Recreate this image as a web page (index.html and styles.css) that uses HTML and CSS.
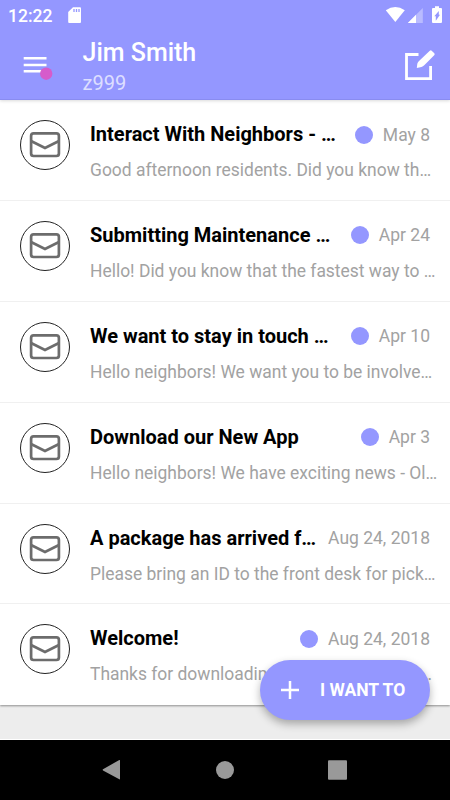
FILE: index.html
```
<!DOCTYPE html>
<html lang="en">
<head>
<meta charset="utf-8">
<title>Messages</title>
<link rel="stylesheet" href="styles.css">
</head>
<body>
<svg class="defs" width="0" height="0" aria-hidden="true">
  <symbol id="mail" viewBox="0 0 50 50">
    <circle cx="25" cy="25" r="24.5" fill="#fff" stroke="#222" stroke-width="1"/>
    <rect x="11.100" y="13.400" width="27.800" height="22.600" rx="2.500" fill="none" stroke="#6c6c6c" stroke-width="2.700"/>
    <path d="M11.500 21.200 25 28 38.500 21.200" fill="none" stroke="#6c6c6c" stroke-width="2.700"/>
  </symbol>
</svg>
<div class="screen">
  <header class="header">
    <div class="status">
      <span class="clock">12:22</span>
      <svg class="sd" width="14" height="17" viewBox="0 0 14 17"><path d="M5 .2h7Q13 .2 13 1.200v13.800q0 1-1 1H1.200q-1 0-1-1V5Z" fill="#fff"/><path d="M6 2v3M8.500 2v3M11 2v3" stroke="#9497ff" stroke-width="1.300"/></svg>
      <svg class="signals" width="58" height="18" viewBox="0 0 58 18">
        <path d="M.8 4.300Q10.300-2.300 19.800 4.300L10.300 16Z" fill="#fff"/>
        <path d="M37.800 2v15H22.800Z" fill="#fff" opacity=".35"/>
        <path d="M31 8.800V17h-8.200Z" fill="#fff"/>
        <path d="M50 .2h4v1.900h2q1 0 1 1v13q0 1-1 1h-8q-1 0-1-1v-13q0-1 1-1h2Z" fill="#fff"/>
        <path d="M53.800 5v3.700h1.200L50.800 14.800v-4.500h-1.500Z" fill="#9497ff"/>
      </svg>
    </div>
    <div class="bar">
      <div class="menu"><svg width="30" height="24" viewBox="0 0 30 24"><path d="M.7 2.300h22.800M.7 8.900h22.800M.7 15.300h22.800" stroke="#fff" stroke-width="2.500"/><circle cx="23.200" cy="17.700" r="6.200" fill="#d65ccb"/></svg></div>
      <div class="who"><div class="name">Jim Smith</div><div class="unit">z999</div></div>
      <svg class="compose" width="32" height="32" viewBox="0 0 32 32"><path d="M14.500 5.500H2.500V29.600H26.600V17" fill="none" stroke="#fff" stroke-width="2.800"/><path d="M12.800 19 13.300 14.800Q13.800 13.300 15 12.100L25.800 1.700Q26.700 .900 27.700 1.700L30.300 4.300Q31.200 5.300 30.200 6.300L20.500 16Q19 17.500 17.400 18Z" fill="#fff"/></svg>
    </div>
  </header>
  <main class="list">
    <article class="row"><svg class="mail"><use href="#mail"/></svg><div class="body"><div class="top"><h2>Interact With Neighbors - …</h2><i class="dot"></i><time>May 8</time></div><p>Good afternoon residents. Did you know th…</p></div></article>
    <article class="row"><svg class="mail"><use href="#mail"/></svg><div class="body"><div class="top"><h2>Submitting Maintenance …</h2><i class="dot"></i><time>Apr 24</time></div><p>Hello! Did you know that the fastest way to …</p></div></article>
    <article class="row"><svg class="mail"><use href="#mail"/></svg><div class="body"><div class="top"><h2>We want to stay in touch …</h2><i class="dot"></i><time>Apr 10</time></div><p>Hello neighbors! We want you to be involve…</p></div></article>
    <article class="row"><svg class="mail"><use href="#mail"/></svg><div class="body"><div class="top"><h2>Download our New App</h2><i class="dot"></i><time>Apr 3</time></div><p>Hello neighbors! We have exciting news - Ol…</p></div></article>
    <article class="row"><svg class="mail"><use href="#mail"/></svg><div class="body"><div class="top"><h2>A package has arrived f…</h2><time>Aug 24, 2018</time></div><p>Please bring an ID to the front desk for pick…</p></div></article>
    <article class="row"><svg class="mail"><use href="#mail"/></svg><div class="body"><div class="top"><h2>Welcome!</h2><i class="dot"></i><time>Aug 24, 2018</time></div><p class="last"><span>Thanks for downloading</span><span>.</span></p></div></article>
  </main>
  <div class="spacer"></div>
  <button class="fab"><svg width="18" height="18" viewBox="0 0 18 18"><path d="M9 0v18M0 9h18" stroke="#fff" stroke-width="2.500"/></svg><span>I WANT TO</span></button>
  <nav class="nav">
    <svg width="20" height="22" viewBox="0 0 20 22"><path d="M1 10.200 17.300 1Q18 .700 18 1.500V20Q18 20.700 17.300 20.300L1 11.500Q.300 10.800 1 10.200Z" fill="#999"/></svg>
    <svg width="20" height="20" viewBox="0 0 20 20"><circle cx="10" cy="10" r="9" fill="#999"/></svg>
    <svg width="20" height="20" viewBox="0 0 20 20"><rect x="0" y=".3" width="19" height="19.400" rx="1" fill="#999"/></svg>
  </nav>
</div>
</body>
</html>
```
FILE: styles.css
```
* { box-sizing: border-box; }
body { margin: 0; font-family: Roboto, sans-serif; background: #ededed; }
h2, p { margin: 0; }
.defs { position: absolute; }
.screen { position: relative; width: 450px; height: 800px; display: flex; flex-direction: column; overflow: hidden; background: #ededed; }
.header { height: 100px; background: #9497ff; color: #fff; border-bottom: 1px solid #898cf0; flex: none; z-index: 1; box-shadow: 0 1px 3px rgba(0,0,0,.15); }
.status { height: 30px; padding: 7px 7px 0 8px; display: flex; align-items: flex-start; }
.clock { font-size: 17.5px; line-height: 18px; font-weight: 500; width: 60px; }
.signals { margin: -1px 0 0 auto; }
.bar { display: flex; height: 69px; padding: 0 14px 0 23px; }
.menu { width: 59.5px; padding-top: 26px; }
.who { flex: 1; padding-top: 8px; }
.name { font-size: 25px; line-height: 30px; font-weight: 500; }
.unit { font-size: 20px; line-height: 30px; color: rgba(255,255,255,.7); }
.compose { margin-top: 19px; }
.list { height: 605px; flex: none; background: #fff; box-shadow: 0 1px 2px rgba(0,0,0,.4); }
.row { height: 100.9px; display: flex; padding: 20px 13px 0 20px; border-bottom: 1px solid #f0f0f0; }
.row:last-child { border-bottom: 0; }
.mail { width: 50px; height: 50px; flex: none; margin-right: 20px; }
.body { flex: 1; min-width: 0; }
.top { display: flex; align-items: center; height: 29px; padding-right: 7px; }
h2 { flex: 1; font-size: 20px; line-height: 29px; font-weight: 700; color: #000; white-space: nowrap; }
.dot { width: 18px; height: 18px; border-radius: 50%; background: #9497ff; margin-right: 10px; }
time { font-size: 17.5px; line-height: 30px; color: #a2a2a2; white-space: nowrap; }
p { margin-top: 6px; font-size: 17.46px; line-height: 30px; color: #a2a2a2; white-space: nowrap; }
.last { display: flex; justify-content: space-between; padding-right: 5px; }
.spacer { height: 35px; flex: none; border-bottom: 1px solid #fff; }
.fab { position: absolute; left: 260px; top: 660px; width: 170px; height: 60px; border: 0; border-radius: 30px; background: #9497ff; color: #fff; display: flex; align-items: center; padding: 0 0 0 21px; font: 700 17.5px/20px Roboto, sans-serif; gap: 21px; z-index: 2; box-shadow: 0 4px 8px rgba(0,0,0,.3); }
.nav { height: 60px; flex: none; background: #000; display: flex; align-items: center; justify-content: center; gap: 93px; }
```
